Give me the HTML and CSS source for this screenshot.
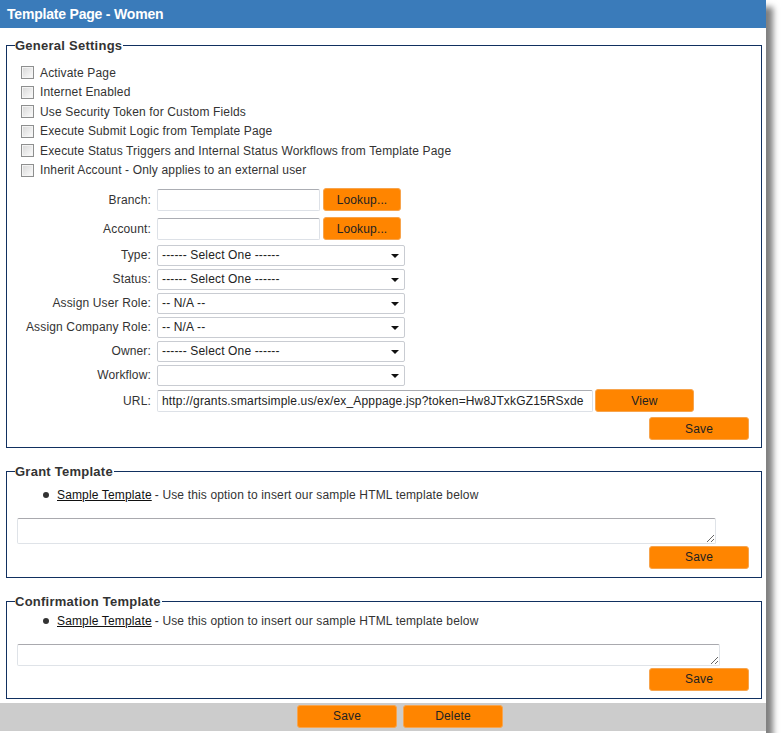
FILE: index.html
```html
<!DOCTYPE html>
<html lang="en">
  <head>
    <meta charset="UTF-8">
    <meta name="viewport" content="width=device-width, initial-scale=1.0">
    <title>Template Page - Women</title>
    <link rel="stylesheet" href="styles.css">
  </head>
  <body>
    <div class="window">
      <div class="title-bar">Template Page - Women</div>

      <div class="content">
        <!-- General settings -->
        <fieldset class="group general">
          <legend>General Settings</legend>

          <div class="options">
            <label class="option"><input type="checkbox">Activate Page</label>
            <label class="option"><input type="checkbox">Internet Enabled</label>
            <label class="option"><input type="checkbox">Use Security Token for Custom Fields</label>
            <label class="option"><input type="checkbox">Execute Submit Logic from Template Page</label>
            <label class="option"><input type="checkbox">Execute Status Triggers and Internal Status Workflows from Template Page</label>
            <label class="option"><input type="checkbox">Inherit Account - Only applies to an external user</label>
          </div>

          <div class="form">
            <div class="row lookup-row">
              <span class="label">Branch:</span>
              <input type="text" class="text-box short">
              <button class="orange-button lookup-button">Lookup...</button>
            </div>
            <div class="row lookup-row">
              <span class="label">Account:</span>
              <input type="text" class="text-box short">
              <button class="orange-button lookup-button">Lookup...</button>
            </div>
            <div class="row select-row">
              <span class="label">Type:</span>
              <div class="select-box">------ Select One ------</div>
            </div>
            <div class="row select-row">
              <span class="label">Status:</span>
              <div class="select-box">------ Select One ------</div>
            </div>
            <div class="row select-row">
              <span class="label">Assign User Role:</span>
              <div class="select-box">-- N/A --</div>
            </div>
            <div class="row select-row">
              <span class="label">Assign Company Role:</span>
              <div class="select-box">-- N/A --</div>
            </div>
            <div class="row select-row">
              <span class="label">Owner:</span>
              <div class="select-box">------ Select One ------</div>
            </div>
            <div class="row select-row">
              <span class="label">Workflow:</span>
              <div class="select-box"></div>
            </div>
            <div class="row url-row">
              <span class="label">URL:</span>
              <input type="text" class="text-box long" value="http://grants.smartsimple.us/ex/ex_Apppage.jsp?token=Hw8JTxkGZ15RSxde">
              <button class="orange-button view-button">View</button>
            </div>
          </div>

          <div class="actions general-actions">
            <button class="orange-button save-button">Save</button>
          </div>
        </fieldset>

        <!-- Grant template -->
        <fieldset class="group grant">
          <legend>Grant Template</legend>
          <ul class="hint">
            <li><a href="#" class="sample-link">Sample Template</a> - Use this option to insert our sample HTML template below</li>
          </ul>
          <textarea class="template-box grant-box"></textarea>
          <div class="actions">
            <button class="orange-button save-button">Save</button>
          </div>
        </fieldset>

        <!-- Confirmation template -->
        <fieldset class="group confirm">
          <legend>Confirmation Template</legend>
          <ul class="hint">
            <li><a href="#" class="sample-link">Sample Template</a> - Use this option to insert our sample HTML template below</li>
          </ul>
          <textarea class="template-box confirm-box"></textarea>
          <div class="actions">
            <button class="orange-button save-button">Save</button>
          </div>
        </fieldset>
      </div>

      <div class="footer">
        <button class="orange-button save-button">Save</button>
        <button class="orange-button save-button">Delete</button>
      </div>
    </div>
  </body>
</html>
```

FILE: styles.css
```css
body {
    margin: 0;
    background-color: white;
    font-family: "Liberation Sans", Arial, sans-serif;
    font-size: 12px;
    letter-spacing: 0.15px;
    color: #333;
}

.window {
    width: 766px;
    background-color: white;
    box-shadow: 7px 7px 6px rgba(0, 0, 0, 0.5);
    padding-bottom: 2px;
}

.title-bar {
    background-color: #3a7bba;
    color: white;
    font-size: 14px;
    font-weight: bold;
    letter-spacing: -0.2px;
    height: 28px;
    line-height: 28px;
    padding-left: 7px;
}

.content {
    padding-bottom: 4px;
}

.group {
    margin: 16px 4px 0 6px;
    padding: 0 8px 7px 8px;
    border: 1px solid #113060;
    min-width: 0;
}

.general {
    margin-top: 10px;
}

.group legend {
    padding: 0 1px 0 0;
    font-size: 13px;
    font-weight: bold;
    letter-spacing: 0.25px;
    line-height: 15px;
    color: #333;
}

.options {
    margin-top: 10px;
}

.option {
    display: flex;
    align-items: center;
    height: 19.5px;
}

.option input {
    appearance: none;
    width: 13px;
    height: 13px;
    margin: 0 6px 0 6px;
    border: 1px solid #8e8f8f;
    background: linear-gradient(135deg, #d6d6d6, #fdfdfd);
    box-shadow: inset 0 0 0 1px #f4f4f4;
}

.form {
    margin-top: 5px;
}

.row {
    display: flex;
    align-items: center;
}

.lookup-row {
    height: 29px;
}

.select-row {
    height: 24px;
}

.url-row {
    height: 27px;
}

.label {
    width: 136px;
    text-align: right;
    margin-right: 6px;
    flex-shrink: 0;
}

.text-box {
    box-sizing: border-box;
    height: 22px;
    border: 1px solid #dde1e7;
    border-top-color: #abadb3;
    border-radius: 2px;
    padding: 0 4px;
    font-family: inherit;
    font-size: 12px;
    letter-spacing: 0.15px;
    color: #222;
    margin: 0;
}

.short {
    width: 163px;
}

.long {
    width: 436px;
}

.select-box {
    box-sizing: border-box;
    position: relative;
    width: 248px;
    height: 21px;
    line-height: 19px;
    border: 1px solid #c9ccd2;
    border-radius: 2px;
    padding-left: 4px;
    color: #222;
}

.select-box::after {
    content: "";
    position: absolute;
    right: 5px;
    top: 8px;
    border-left: 4px solid transparent;
    border-right: 4px solid transparent;
    border-top: 4px solid #111;
}

.orange-button {
    box-sizing: border-box;
    height: 23px;
    background-color: #ff8500;
    border: 1px solid #f7a44d;
    border-radius: 3px;
    font-family: inherit;
    font-size: 12px;
    letter-spacing: 0.15px;
    color: #222;
    padding: 0;
    cursor: pointer;
}

.lookup-button {
    width: 78px;
    margin-left: 3px;
}

.view-button {
    width: 99px;
    margin-left: 2px;
}

.save-button {
    width: 100px;
}

.actions {
    display: flex;
    justify-content: flex-end;
    padding-right: 4px;
    margin-top: 2px;
}

.general-actions {
    margin-top: 3px;
}

.hint {
    list-style: none;
    margin: 8px 0 0 0;
    padding-left: 28px;
}

.hint li {
    display: flex;
    align-items: center;
    height: 15px;
}

.hint li::before {
    content: "";
    width: 6px;
    height: 6px;
    border-radius: 50%;
    background-color: #333;
    margin-right: 8px;
}

.sample-link {
    color: #111;
    text-decoration: underline;
    margin-right: 3px;
}

.template-box {
    display: block;
    box-sizing: border-box;
    margin: 15.5px 0 0 2px;
    border: 1px solid #dfe3e8;
    border-top-color: #a9a9ae;
    border-radius: 2px;
    font-family: inherit;
}

.grant-box {
    width: 699px;
    height: 26px;
}

.grant {
    padding-bottom: 8px;
}

.confirm {
    padding-bottom: 7px;
}

.confirm .hint {
    margin-top: 4.5px;
}

.confirm-box {
    width: 703px;
    height: 22px;
}

.grant .actions,
.confirm .actions {
    margin-top: 2px;
}

.footer {
    background-color: #cccccc;
    height: 28px;
    box-sizing: border-box;
    padding: 2px 0 0 34px;
    display: flex;
    justify-content: center;
    gap: 6px;
}
```
